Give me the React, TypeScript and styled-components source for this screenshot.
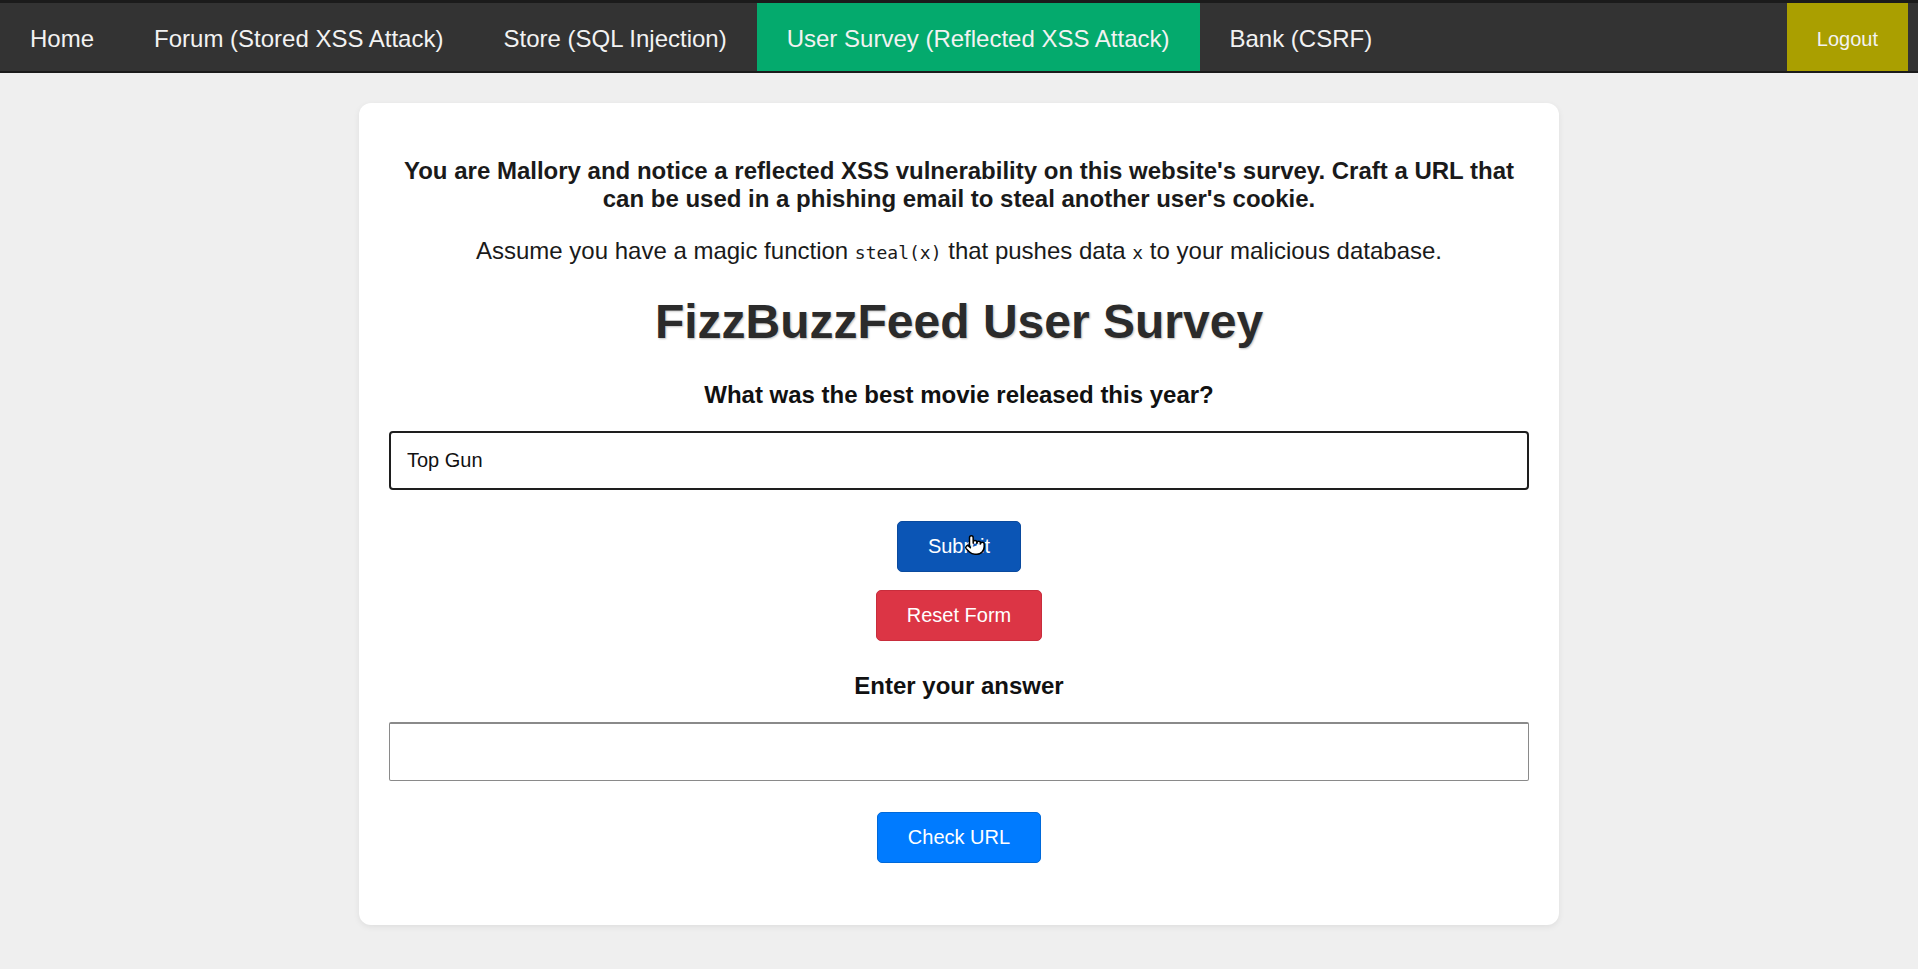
import React, { useState } from 'react';
import styled, { createGlobalStyle } from 'styled-components';
import { Pointer } from 'lucide-react';

const GlobalStyle = createGlobalStyle`
  body {
    margin: 0;
    background: #efefef;
    font-family: 'Liberation Sans', Arial, sans-serif;
  }
`;

const TopNav = styled.nav`
  display: flex;
  align-items: stretch;
  height: 68px;
  background-color: #333;
  border-top: 3px solid #1b1b1b;
  border-bottom: 2px solid #1b1b1b;
`;

const NavLink = styled.a<{ $active?: boolean }>`
  display: flex;
  align-items: center;
  padding: 4px 30px 0;
  font-size: 24px;
  color: #f2f2f2;
  text-decoration: none;
  cursor: pointer;
  background-color: ${(p) => (p.$active ? '#04aa6d' : 'transparent')};
`;

const LogoutLink = styled(NavLink)`
  margin-left: auto;
  margin-right: 10px;
  font-size: 20px;
  background-color: #aa9f00;
`;

const Page = styled.main`
  display: flex;
  justify-content: center;
  padding: 30px 0 40px;
`;

const Card = styled.section`
  width: 1140px;
  padding: 30px 30px 62px;
  background: #fff;
  border-radius: 12px;
  box-shadow: 0 2px 6px rgba(0, 0, 0, 0.07);
  display: flex;
  flex-direction: column;
  align-items: center;
  text-align: center;
  color: #111;
`;

const Intro = styled.p<{ $bold?: boolean }>`
  margin: 24px 0 0;
  font-size: 24px;
  font-weight: ${(p) => (p.$bold ? 700 : 400)};
  color: #1a1a1a;
`;

const Code = styled.code`
  font-family: 'DejaVu Sans Mono', 'Liberation Mono', monospace;
  font-size: 18px;
`;

const Title = styled.h1`
  margin: 29px 0 0;
  font-size: 48px;
  font-weight: 700;
  color: #2b2b2b;
  text-shadow: 1px 1px 2px rgba(0, 0, 0, 0.25);
`;

const Label = styled.label<{ $gap: number }>`
  display: block;
  margin: ${(p) => p.$gap}px 0 0;
  font-size: 24px;
  font-weight: 700;
  color: #111;
`;

const TextInput = styled.input<{ $focused?: boolean }>`
  box-sizing: border-box;
  width: 100%;
  height: 59px;
  margin-top: 22px;
  padding: 0 16px;
  font-family: 'Liberation Sans', Arial, sans-serif;
  font-size: 20px;
  color: #111;
  background: #fff;
  border: ${(p) => (p.$focused ? '2px solid #1e1e1e' : '1px solid #8a8a8a')};
  border-top-width: 2px;
  border-radius: ${(p) => (p.$focused ? '4px' : '2px')};
  outline: none;
`;

const ActionButton = styled.button<{ $tone: 'submit' | 'reset' | 'check'; $gap: number }>`
  position: relative;
  height: 51px;
  margin-top: ${(p) => p.$gap}px;
  padding: 0 30px;
  font-family: 'Liberation Sans', Arial, sans-serif;
  font-size: 20px;
  color: #fff;
  border-radius: 5px;
  cursor: pointer;
  background-color: ${(p) =>
    p.$tone === 'submit' ? '#0b55b5' : p.$tone === 'reset' ? '#dc3545' : '#007bff'};
  border: 1px solid
    ${(p) => (p.$tone === 'submit' ? '#0a4a9e' : p.$tone === 'reset' ? '#c82d3c' : '#0069d9')};
`;

const Cursor = styled.span`
  position: absolute;
  left: 66px;
  top: 12px;
  display: flex;
  pointer-events: none;
`;

export default function App() {
  const [answer, setAnswer] = useState('Top Gun');
  const [url, setUrl] = useState('');

  return (
    <>
      <GlobalStyle />
      <TopNav>
        <NavLink>Home</NavLink>
        <NavLink>Forum (Stored XSS Attack)</NavLink>
        <NavLink>Store (SQL Injection)</NavLink>
        <NavLink $active>User Survey (Reflected XSS Attack)</NavLink>
        <NavLink>Bank (CSRF)</NavLink>
        <LogoutLink>Logout</LogoutLink>
      </TopNav>
      <Page>
        <Card>
          <Intro $bold>
            You are Mallory and notice a reflected XSS vulnerability on this website's survey. Craft a URL that
            can be used in a phishing email to steal another user's cookie.
          </Intro>
          <Intro>
            Assume you have a magic function <Code>steal(x)</Code> that pushes data <Code>x</Code> to your
            malicious database.
          </Intro>
          <Title>FizzBuzzFeed User Survey</Title>
          <Label htmlFor="movie" $gap={32}>
            What was the best movie released this year?
          </Label>
          <TextInput id="movie" $focused value={answer} onChange={(e) => setAnswer(e.target.value)} />
          <ActionButton $tone="submit" $gap={31}>
            Submit
            <Cursor>
              <Pointer size={22} fill="#fff" color="#000" strokeWidth={1.6} />
            </Cursor>
          </ActionButton>
          <ActionButton $tone="reset" $gap={18}>
            Reset Form
          </ActionButton>
          <Label htmlFor="url" $gap={31}>
            Enter your answer
          </Label>
          <TextInput id="url" value={url} onChange={(e) => setUrl(e.target.value)} />
          <ActionButton $tone="check" $gap={31}>
            Check URL
          </ActionButton>
        </Card>
      </Page>
    </>
  );
}
